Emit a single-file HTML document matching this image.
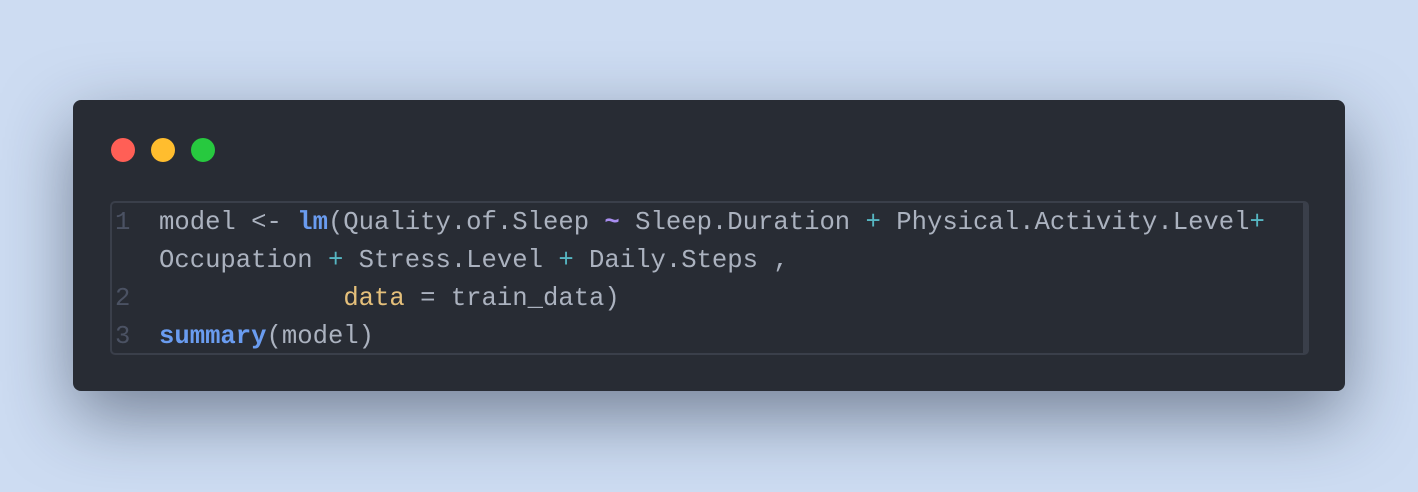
<!DOCTYPE html>
<html><head><style>
html,body{margin:0;padding:0}
body{width:1418px;height:492px;background:#cddcf2;position:relative;overflow:hidden;font-family:"Liberation Mono",monospace}
.win{position:absolute;left:73px;top:100px;width:1272px;height:291px;background:#282c34;border-radius:8px;box-shadow:0 25px 70px rgba(30,40,60,.5)}
.dot{position:absolute;top:38px;width:24px;height:24px;border-radius:50%}
.box{position:absolute;left:37px;top:101px;width:1191px;height:150px;border:2px solid #3a3f4a;border-right-width:6px;border-radius:5px}
.ln{position:absolute;font-size:25.6px;line-height:38px;white-space:pre;color:#abb2bf}
.n{color:#4b5263}
.b{color:#6a9cf0;font-weight:bold}
.c{color:#56b6c2}
.y{color:#e5c07b}
.p{color:#a98ef0;font-weight:bold}
</style></head><body>
<div class="win">
<div class="dot" style="left:38px;background:#ff5f56"></div>
<div class="dot" style="left:78px;background:#ffbd2e"></div>
<div class="dot" style="left:118px;background:#27c93f"></div>
<div class="box"></div>
<div class="ln" style="left:42px;top:104px"><span class="n">1</span></div>
<div class="ln" style="left:42px;top:180px"><span class="n">2</span></div>
<div class="ln" style="left:42px;top:218px"><span class="n">3</span></div>
<div class="ln" style="left:86px;top:104px">model &lt;- <span class="b">lm</span>(Quality.of.Sleep <span class="p">~</span> Sleep.Duration <span class="c">+</span> Physical.Activity.Level<span class="c">+</span></div>
<div class="ln" style="left:86px;top:142px">Occupation <span class="c">+</span> Stress.Level <span class="c">+</span> Daily.Steps ,</div>
<div class="ln" style="left:86px;top:180px">            <span class="y">data</span> = train_data)</div>
<div class="ln" style="left:86px;top:218px"><span class="b">summary</span>(model)</div>
</div>
</body></html>
